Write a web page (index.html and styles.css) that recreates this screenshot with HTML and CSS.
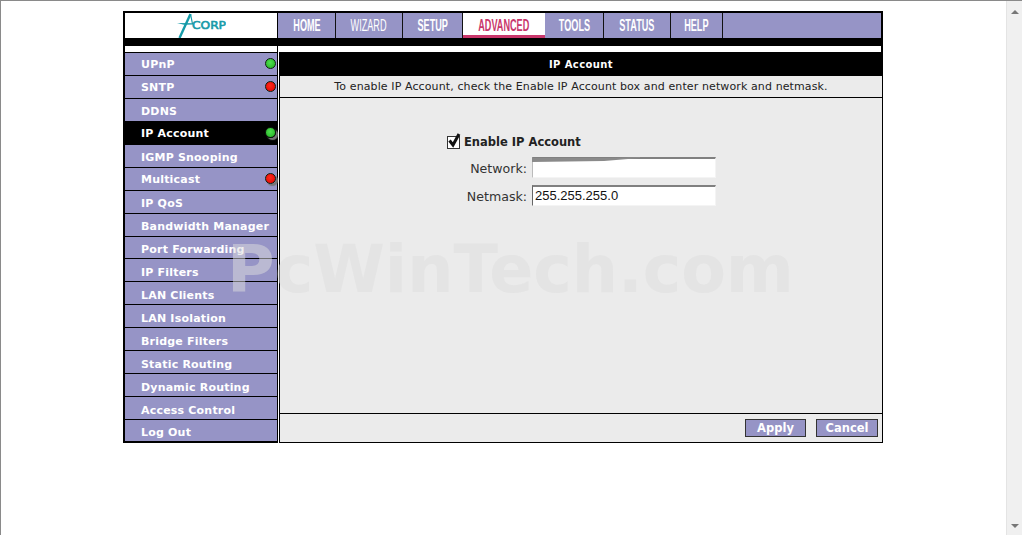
FILE: index.html
```html
<!DOCTYPE html>
<html lang="en">
<head>
<meta charset="utf-8">
<title>IP Account</title>
<link rel="stylesheet" href="styles.css">
</head>
<body>
<div class="browser">
  <div class="viewport">
    <div class="router">
      <header class="topbar">
        <div class="logo">
          <svg class="logo-svg" width="50" height="25" viewBox="0 0 50 25">
            <path class="logo-stroke" d="M14.5 1 L3.5 25"/>
            <path class="logo-thin" d="M14.5 1 L16.5 11"/>
            <path class="logo-star" d="M1 10 L17 10.2 L17 11.4 L8 11.8 Z"/>
            <text class="logo-text" x="16" y="16" textLength="34" lengthAdjust="spacingAndGlyphs">CORP</text>
          </svg>
        </div>
        <nav class="tabs">
          <a class="tab w-home"><span class="tab-text">HOME</span></a>
          <a class="tab w-wizard tab-thin"><span class="tab-text">WIZARD</span></a>
          <a class="tab w-setup"><span class="tab-text">SETUP</span></a>
          <a class="tab w-advanced tab-active"><span class="tab-text">ADVANCED</span></a>
          <a class="tab w-tools"><span class="tab-text">TOOLS</span></a>
          <a class="tab w-status"><span class="tab-text">STATUS</span></a>
          <a class="tab w-help"><span class="tab-text">HELP</span></a>
          <span class="tab-fill"></span>
        </nav>
      </header>
      <div class="band"></div>
      <div class="strip"><span class="strip-l"></span><span class="strip-r"></span></div>
      <div class="body">
        <aside class="side">
          <a class="item item-hi">UPnP<i class="led led-green"></i></a>
          <a class="item item-hi">SNTP<i class="led led-red"></i></a>
          <a class="item">DDNS</a>
          <a class="item item-hi item-active">IP Account<i class="led led-green led-shadow"></i></a>
          <a class="item">IGMP Snooping</a>
          <a class="item item-hi">Multicast<i class="led led-red led-shadow"></i></a>
          <a class="item">IP QoS</a>
          <a class="item">Bandwidth Manager</a>
          <a class="item">Port Forwarding</a>
          <a class="item">IP Filters</a>
          <a class="item">LAN Clients</a>
          <a class="item">LAN Isolation</a>
          <a class="item">Bridge Filters</a>
          <a class="item">Static Routing</a>
          <a class="item">Dynamic Routing</a>
          <a class="item">Access Control</a>
          <a class="item item-last">Log Out</a>
        </aside>
        <main class="panel">
          <div class="title">IP Account</div>
          <div class="desc">To enable IP Account, check the Enable IP Account box and enter network and netmask.</div>
          <div class="content">
            <div class="form">
              <label class="enable"><span class="check"><svg width="14" height="16" viewBox="0 0 14 16"><path class="tick" d="M2.5 7.5 L6 12 L12 1"/></svg></span>Enable IP Account</label>
              <div class="row"><span class="lbl">Network:</span><span class="field field-blur"><svg class="smear" width="110" height="8" viewBox="0 0 110 8"><path d="M0 1 L75 1 L108 0 L108 1 L72 4 L0 5 Z"/></svg></span></div>
              <div class="row"><span class="lbl">Netmask:</span><span class="field">255.255.255.0</span></div>
            </div>
          </div>
          <div class="foot">
            <button class="btn" type="button">Apply</button>
            <button class="btn btn-cancel" type="button">Cancel</button>
          </div>
        </main>
      </div>
      <div class="mark">PcWinTech.com</div>
    </div>
  </div>
  <div class="scroll">
    <span class="arrow arrow-up"></span>
    <span class="arrow arrow-down"></span>
  </div>
</div>
</body>
</html>
```
FILE: styles.css
```css
* { box-sizing: border-box; }
html, body { margin: 0; height: 100%; overflow: hidden; background: #fff; }
.browser { display: flex; width: 1022px; height: 535px; border-top: 1px solid #8a8a8a; border-left: 1px solid #8a8a8a; }
.viewport { flex: 1; padding: 10px 0 0 122px; }
.scroll { width: 16px; background: #f0f0f0; border-left: 1px solid #e4e4e4; display: flex; flex-direction: column; justify-content: space-between; align-items: center; padding: 9px 0 7px; }
.arrow { width: 0; height: 0; border-left: 4px solid transparent; border-right: 4px solid transparent; }
.arrow-up { border-bottom: 4px solid #777; }
.arrow-down { border-top: 4px solid #777; }

.router { position: relative; width: 760px; height: 432px; border: solid #000; border-width: 2px 0 0 2px; font-family: "DejaVu Sans", Verdana, sans-serif; }
.topbar { display: flex; height: 25px; border-right: 2px solid #000; }
.logo { width: 153px; background: #fff; border-right: 1px solid #000; display: flex; justify-content: center; }
.logo-svg { display: block; }
.logo-stroke { fill: none; stroke: #159aa8; stroke-width: 2.4; }
.logo-thin { fill: none; stroke: #159aa8; stroke-width: 1.2; }
.logo-star { fill: #159aa8; }
.logo-text { font: 400 11px "DejaVu Sans", sans-serif; fill: #159aa8; stroke: #159aa8; stroke-width: 0.6; }
.tabs { flex: 1; display: flex; }
.tab { display: flex; align-items: center; justify-content: center; background: #9694c6; color: #fff; border-right: 1px solid #111; font: 700 16px "Liberation Sans", sans-serif; overflow: hidden; }
.tab-text { display: inline-block; transform: scaleX(0.57); white-space: nowrap; }
.tab-thin { font-weight: 400; }
.w-home { width: 58px; }
.w-wizard { width: 67px; }
.w-setup { width: 60px; }
.w-advanced { width: 82px; }
.w-tools { width: 59px; }
.w-status { width: 67px; }
.w-help { width: 52px; }
.tab-active { background: #fff; color: #c9366b; border-bottom: 3px solid #c9366b; border-right: 0; padding-top: 3px; }
.tab-fill { flex: 1; background: #9694c6; }
.band { height: 8px; background: #000; border-right: 2px solid #000; }
.strip { display: flex; height: 6px; background: #000; border-right: 2px solid #000; }
.strip-l { width: 152px; background: #fff; }
.strip-r { flex: 1; margin-left: 1px; background: #fff; }

.body { display: flex; height: 391px; align-items: flex-start; }
.side { width: 153px; height: 391px; display: flex; flex-direction: column; border-right: 1px solid #000; border-bottom: 2px solid #000; background: #000; }
.item { position: relative; display: flex; align-items: center; height: 23px; padding: 4px 0 0 16px; background: #9694c6; color: #fff; border-top: 1px solid #000; font-weight: 700; font-size: 11px; letter-spacing: 0.2px; white-space: nowrap; }
.item-hi { padding-top: 2px; }
.item-active { background: #000; }
.item-last { height: 22px; }
.led { position: absolute; right: 1px; top: 5px; width: 11px; height: 11px; border-radius: 50%; border: 1px solid #0e1e0e; }
.led-green { background: radial-gradient(circle at 45% 40%, #4fe04f, #1fae1f); }
.led-red { background: radial-gradient(circle at 45% 40%, #ff2a1a, #e00000); }
.led-shadow { box-shadow: 2px 2px 1px #777; }

.panel { margin-left: 1px; width: 604px; height: 391px; display: flex; flex-direction: column; border: solid #000; border-width: 0 1px 1px 1px; background: #ebebeb; }
.title { height: 24px; background: #000; color: #fff; font-size: 10px; font-weight: 700; letter-spacing: 0.4px; display: flex; align-items: center; justify-content: center; padding-top: 1px; }
.desc { height: 22px; border-bottom: 1px solid #000; font-size: 11px; letter-spacing: 0.11px; color: #222; display: flex; align-items: center; justify-content: center; }
.content { flex: 1; padding-top: 35px; }
.form { margin-left: 167px; }
.enable { display: flex; align-items: center; gap: 4px; height: 18px; font-size: 11.5px; font-weight: 700; color: #222; }
.check { width: 13px; height: 13px; border: 1px solid #333; background: #fff; position: relative; display: block; }
.check svg { position: absolute; left: -1px; top: -4px; }
.tick { fill: none; stroke: #111; stroke-width: 3; }
.row { display: flex; align-items: center; justify-content: flex-end; gap: 5px; width: 269px; height: 22px; margin-top: 5px; }
.row + .row { margin-top: 6px; }
.lbl { font-size: 12.6px; color: #333; font-family: "DejaVu Sans", sans-serif; padding-top: 2px; }
.field { position: relative; display: flex; align-items: center; width: 184px; height: 21px; background: #fff; border: 1px solid; border-top: 2px solid #808080; border-color: #808080 #f4f4f4 #f4f4f4 #666; font: 13px "Liberation Sans", Arial, sans-serif; color: #111; padding-left: 2px; }
.field-blur { border-left-color: #bbb; }
.smear { position: absolute; left: -1px; top: -2px; fill: #8a8a8a; }

.foot { height: 29px; border-top: 1px solid #000; display: flex; align-items: center; justify-content: flex-end; gap: 10px; padding-right: 4px; }
.btn { width: 61px; height: 18px; padding: 0; background: #9694c6; color: #fff; border: 1px solid #333; font: 700 11.5px "DejaVu Sans", sans-serif; }
.btn-cancel { width: 62px; }

.mark { position: absolute; left: 102px; top: 219px; color: rgba(222, 222, 222, 0.5); font: 700 65px "DejaVu Sans", Verdana, sans-serif; white-space: nowrap; pointer-events: none; }
```
